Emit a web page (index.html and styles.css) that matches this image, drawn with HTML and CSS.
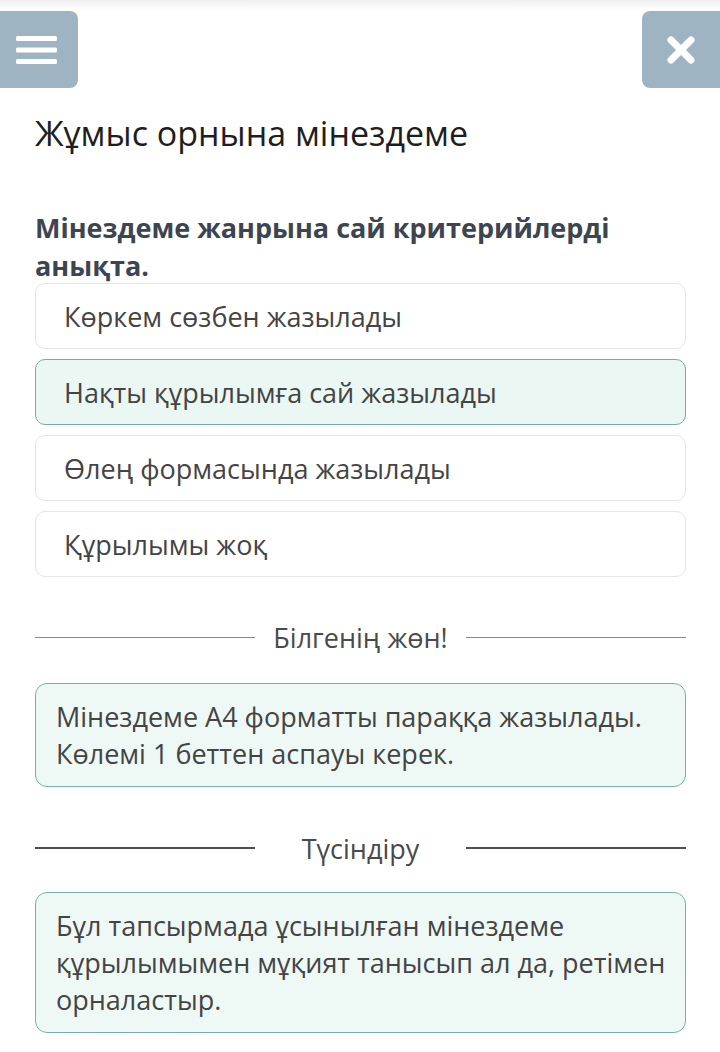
FILE: index.html
```html
<!DOCTYPE html>
<html lang="kk">
<head>
<meta charset="utf-8">
<link rel="stylesheet" href="styles.css">
</head>
<body>
<header class="topbar">
  <button class="icon-btn menu-btn" aria-label="menu">
    <svg width="42" height="30" viewBox="0 0 42 30"><rect x="0" y="1" width="41" height="5" rx="1.5" fill="#fff"/><rect x="0" y="12.5" width="41" height="5" rx="1.5" fill="#fff"/><rect x="0" y="24" width="41" height="5" rx="1.5" fill="#fff"/></svg>
  </button>
  <button class="icon-btn close-btn" aria-label="close">
    <svg width="30" height="30" viewBox="0 0 30 30"><path d="M5 5 L25 25 M25 5 L5 25" stroke="#fff" stroke-width="7" stroke-linecap="round"/></svg>
  </button>
</header>
<main class="content">
  <h1 class="title">Жұмыс орнына мінездеме</h1>
  <p class="question">Мінездеме жанрына сай критерийлерді анықта.</p>
  <div class="options">
    <div class="option">Көркем сөзбен жазылады</div>
    <div class="option selected">Нақты құрылымға сай жазылады</div>
    <div class="option">Өлең формасында жазылады</div>
    <div class="option">Құрылымы жоқ</div>
  </div>
  <div class="divider light"><span>Білгенің жөн!</span></div>
  <div class="info">Мінездеме А4 форматты параққа жазылады. Көлемі 1 беттен аспауы керек.</div>
  <div class="divider dark"><span>Түсіндіру</span></div>
  <div class="info">Бұл тапсырмада ұсынылған мінездеме құрылымымен мұқият танысып ал да, ретімен орналастыр.</div>
</main>
</body>
</html>
```

FILE: styles.css
```css
* { box-sizing: border-box; }
body {
  margin: 0;
  background: #fff;
  font-family: "Open Sans", "Noto Sans", sans-serif;
  color: #454545;
}
.topbar {
  display: flex;
  justify-content: space-between;
  padding-top: 11px;
  background: linear-gradient(#efefef, #fff 10px);
}
.icon-btn {
  width: 78px;
  height: 77px;
  border: none;
  background: #9fb4c2;
  display: flex;
  align-items: center;
  justify-content: center;
  padding: 0;
}
.menu-btn { border-radius: 0 8px 8px 0; padding-right: 4px; }
.close-btn { border-radius: 8px 0 0 8px; }
.content {
  padding: 0 34px 0 35px;
}
.title {
  margin: 23px 0 0;
  font-size: 34px;
  line-height: 44px;
  font-weight: 400;
  color: #1e1e1e;
}
.question {
  margin: 54px 0 0;
  font-size: 27px;
  line-height: 38px;
  font-weight: 700;
  color: #3c4550;
}
.options {
  margin-top: -2px;
  display: flex;
  flex-direction: column;
  gap: 10px;
}
.option {
  height: 66px;
  border: 1px solid #e6e6e6;
  border-radius: 10px;
  padding-left: 28px;
  display: flex;
  align-items: center;
  font-size: 27px;
  color: #444;
}
.option.selected {
  background: #eaf7f2;
  border-color: #76aca4;
}
.divider {
  margin-top: 45px;
  height: 30px;
  display: flex;
  align-items: center;
  gap: 18px;
  font-size: 27px;
  color: #4a4a4a;
}
.divider::before, .divider::after {
  content: "";
  flex: 1;
  height: 1px;
  background: #8a8a8a;
}
.divider.dark::before, .divider.dark::after {
  height: 2px;
  background: #4f4f4f;
}
.divider.dark { margin-top: 46px; gap: 47px; }
.info {
  margin-top: 31px;
  border: 1px solid #7aafa7;
  border-radius: 12px;
  background: #eef9f5;
  padding: 14px 8px 14px 20px;
  font-size: 27px;
  line-height: 37px;
  color: #444;
}
.info:last-child { margin-top: 29px; }
```
